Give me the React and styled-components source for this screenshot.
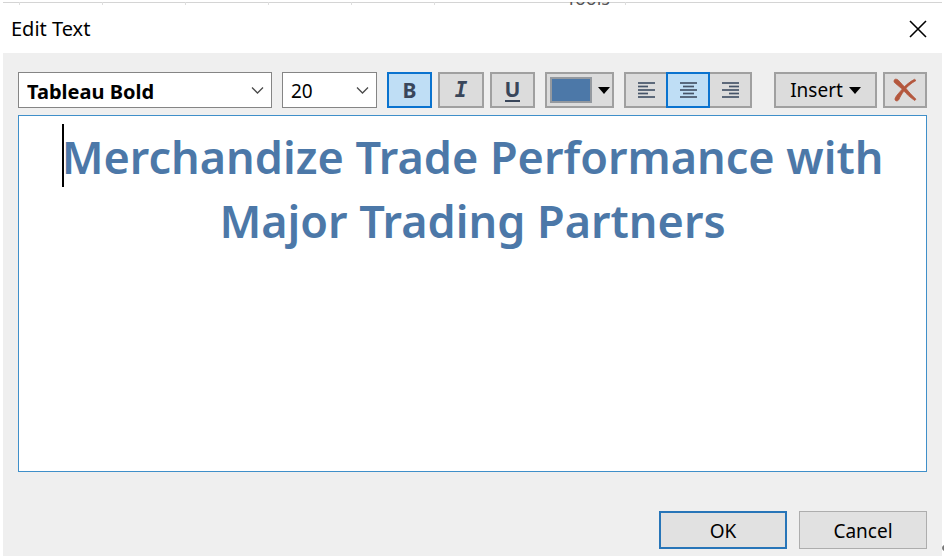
import React, { useState } from "react";
import styled, { createGlobalStyle, css } from "styled-components";

const GlobalStyle = createGlobalStyle`
  *, *::before, *::after { box-sizing: border-box; }
  html, body, #root { height: 100%; }
  body {
    margin: 0;
    background: #ffffff;
    color: #000000;
    font-family: "Noto Sans", "Open Sans", sans-serif;
    overflow: hidden;
  }
  button, select, textarea { font: inherit; color: inherit; }
`;

const Page = styled.div`
  position: relative;
  min-height: 100%;
  display: flex;
  flex-direction: column;
  padding: 0 2px 0 3px;
`;

const BackdropStrip = styled.div`
  flex: none;
  display: grid;
  grid-template-columns: 17px 83px 83px 83px 83px 83px 191px 1fr;
  height: 5px;
  overflow: hidden;
  border-top: 2px solid #ffffff;
  box-shadow: inset 0 1px 0 #d4d4d4;
`;

const BackdropCell = styled.span`
  display: flex;
  align-items: flex-end;
  justify-content: flex-end;
  height: 3px;
  padding-right: 15px;
  border-right: 1px solid #dedede;
`;

const BackdropLabel = styled.span`
  font-size: 18px;
  line-height: 14px;
  color: #555555;
`;

const BackdropMark = styled.svg`
  position: absolute;
  right: 0;
  bottom: 5px;
`;

const Dialog = styled.section`
  flex: 1;
  display: flex;
  flex-direction: column;
  background: #efefef;
`;

const TitleBar = styled.header`
  display: flex;
  align-items: center;
  justify-content: space-between;
  height: 48px;
  padding: 0 15px 0 8px;
  background: #ffffff;
`;

const Title = styled.h1`
  margin: 0;
  font-size: 20px;
  font-weight: 400;
  line-height: 28px;
`;

const CloseButton = styled.button`
  display: flex;
  padding: 0;
  border: 0;
  background: none;
`;

const Body = styled.div`
  flex: 1;
  display: flex;
  flex-direction: column;
  padding: 19px 15px 7px;
`;

const Toolbar = styled.div`
  display: flex;
  height: 36px;
  margin-bottom: 7px;
`;

const Group = styled.div`
  display: flex;
  gap: ${(p) => p.$gap || 0}px;
  margin-right: ${(p) => p.$after || 0}px;
  margin-left: ${(p) => (p.$push ? "auto" : 0)};
  ${(p) =>
    p.$joined &&
    css`
      > * + * { margin-left: -2px; }
    `}
`;

const Picker = styled.label`
  position: relative;
  display: flex;
  width: ${(p) => p.$width}px;
  svg {
    position: absolute;
    right: 8px;
    top: 13px;
    pointer-events: none;
  }
`;

const Select = styled.select`
  appearance: none;
  width: 100%;
  padding: 2px 8px 0;
  border: 1px solid #858585;
  border-radius: 0;
  background: #ffffff;
  font-size: ${(p) => (p.$bold ? 20 : 19)}px;
  font-weight: ${(p) => (p.$bold ? 700 : 400)};
`;

const ToolButton = styled.button`
  display: flex;
  align-items: center;
  justify-content: center;
  gap: 6px;
  width: ${(p) => p.$width}px;
  padding: 0;
  border: 2px solid #a0a0a0;
  background: #dcdcdc;
  font-size: 19px;
  ${(p) =>
    p.$active &&
    css`
      position: relative;
      z-index: 1;
      border-color: #0a73cf;
      background: #bfdef5;
    `}
`;

const Glyph = styled.span`
  color: #39465a;
  font-size: 21px;
  font-weight: 700;
  line-height: 22px;
  font-family: ${(p) => (p.$slab ? '"DejaVu Sans Mono", monospace' : "inherit")};
  font-style: ${(p) => (p.$slab ? "italic" : "normal")};
  border-bottom: ${(p) => (p.$underline ? "2px solid #39465a" : "0")};
`;

const Swatch = styled.span`
  width: 42px;
  height: 26px;
  border: 2px solid #94999f;
  background: #4c78a8;
`;

const Editor = styled.div`
  position: relative;
  flex: 1;
  display: flex;
`;

const TextArea = styled.textarea`
  flex: 1;
  min-width: 0;
  padding: 9px 24px;
  border: 1px solid #3f8fc9;
  outline: 0;
  resize: none;
  background: #ffffff;
  color: #4c78a8;
  font-size: 45px;
  font-weight: 600;
  line-height: 64px;
  text-align: ${(p) => p.$align};
  overflow: hidden;
`;

const Caret = styled.span`
  position: absolute;
  left: 44px;
  top: 9px;
  width: 2px;
  height: 63px;
  background: #000000;
`;

const Footer = styled.footer`
  display: flex;
  justify-content: flex-end;
  gap: 12px;
  margin-top: 39px;
`;

const ActionButton = styled.button`
  width: 128px;
  height: 38px;
  padding: 2px 0 0;
  border: ${(p) => (p.$primary ? "2px solid #2775b8" : "1px solid #adadad")};
  background: #e1e1e1;
  font-size: 19px;
`;

const Chevron = () => (
  <svg width="13" height="10" viewBox="0 0 13 10" fill="none" stroke="#4a4a4a" strokeWidth="1.3" aria-hidden="true">
    <path d="M1 2.5 6.5 8 12 2.5" />
  </svg>
);

const Triangle = () => (
  <svg width="12" height="7" viewBox="0 0 12 7" aria-hidden="true">
    <path d="M0 0H12L6 7Z" />
  </svg>
);

const alignLines = {
  left: [[0, 17], [0, 10], [0, 17], [0, 10], [0, 17]],
  center: [[0, 17], [3, 14], [0, 17], [3, 14], [0, 17]],
  right: [[0, 17], [7, 17], [0, 17], [7, 17], [0, 17]],
};

const AlignIcon = ({ side }) => (
  <svg width="17" height="16" viewBox="0 0 17 16" stroke="#465468" strokeWidth="1.7" aria-hidden="true">
    {alignLines[side].map(([from, to], i) => (
      <path key={i} d={`M${from} ${1 + i * 3.5}H${to}`} />
    ))}
  </svg>
);

const ClearIcon = () => (
  <svg width="24" height="24" viewBox="0 0 24 24" fill="#b4573d" stroke="#b4573d" strokeWidth="0.8" aria-hidden="true">
    <path d="M1 3C1 .8 3.7.6 5.3 2.2 8 5 10.5 8 13 10.5c2.8 3.4 6 7 10 10.7l-1.2 1.3C17 19.5 13.5 16 10.6 12.6 7.5 9.500 4.500 7 2.300 5.300 1.300 4.500 1 4 1 3Z" />
    <path d="M21.500 1.300 23 2.500C17.500 5.500 13 9.500 10.500 13.500 8.500 16.500 7.300 18.500 6 21.300 5 23.500 2 23.400 2 21.200 2 19 5.500 15.500 8.700 11.700 12.400 7.500 16.500 3.800 21.500 1.300Z" />
  </svg>
);

export default function App() {
  const [text, setText] = useState(
    "Merchandize Trade Performance with Major Trading Partners"
  );
  const [align, setAlign] = useState("center");

  return (
    <>
      <GlobalStyle />
      <Page>
        <BackdropStrip aria-hidden="true">
          {[0, 1, 2, 3, 4, 5].map((n) => (
            <BackdropCell key={n} />
          ))}
          <BackdropCell>
            <BackdropLabel>Tools</BackdropLabel>
          </BackdropCell>
        </BackdropStrip>
        <Dialog role="dialog" aria-labelledby="dialog-title">
          <TitleBar>
            <Title id="dialog-title">Edit Text</Title>
            <CloseButton aria-label="Close">
              <svg width="18" height="18" viewBox="0 0 18 18" stroke="#000000" strokeWidth="1.6" aria-hidden="true">
                <path d="M1 1 17 17M17 1 1 17" />
              </svg>
            </CloseButton>
          </TitleBar>
          <Body>
            <Toolbar role="toolbar" aria-label="Formatting">
              <Group $gap={10} $after={10}>
                <Picker $width={254}>
                  <Select $bold aria-label="Font" defaultValue="Tableau Bold">
                    <option>Tableau Bold</option>
                  </Select>
                  <Chevron />
                </Picker>
                <Picker $width={95}>
                  <Select aria-label="Font size" defaultValue="20">
                    <option>20</option>
                  </Select>
                  <Chevron />
                </Picker>
              </Group>
              <Group $gap={6} $after={10}>
                <ToolButton $width={45} $active aria-label="Bold" aria-pressed="true">
                  <Glyph>B</Glyph>
                </ToolButton>
                <ToolButton $width={46} aria-label="Italic">
                  <Glyph $slab>I</Glyph>
                </ToolButton>
                <ToolButton $width={45} aria-label="Underline">
                  <Glyph $underline>U</Glyph>
                </ToolButton>
              </Group>
              <Group $after={10}>
                <ToolButton $width={69} aria-label="Text color">
                  <Swatch />
                  <Triangle />
                </ToolButton>
              </Group>
              <Group $joined>
                {["left", "center", "right"].map((side) => (
                  <ToolButton
                    key={side}
                    $width={44}
                    $active={align === side}
                    aria-label={`Align ${side}`}
                    aria-pressed={align === side}
                    onClick={() => setAlign(side)}
                  >
                    <AlignIcon side={side} />
                  </ToolButton>
                ))}
              </Group>
              <Group $gap={6} $push>
                <ToolButton $width={103}>
                  Insert <Triangle />
                </ToolButton>
                <ToolButton $width={44} aria-label="Clear">
                  <ClearIcon />
                </ToolButton>
              </Group>
            </Toolbar>
            <Editor>
              <TextArea
                aria-label="Text"
                spellCheck={false}
                $align={align}
                value={text}
                onChange={(e) => setText(e.target.value)}
              />
              <Caret />
            </Editor>
            <Footer>
              <ActionButton $primary>OK</ActionButton>
              <ActionButton>Cancel</ActionButton>
            </Footer>
          </Body>
        </Dialog>
        <BackdropMark width="2" height="6" viewBox="0 0 2 6" aria-hidden="true">
          <path d="M2 0Q0 1 0 3T2 6Z" fill="#777777" />
        </BackdropMark>
      </Page>
    </>
  );
}
